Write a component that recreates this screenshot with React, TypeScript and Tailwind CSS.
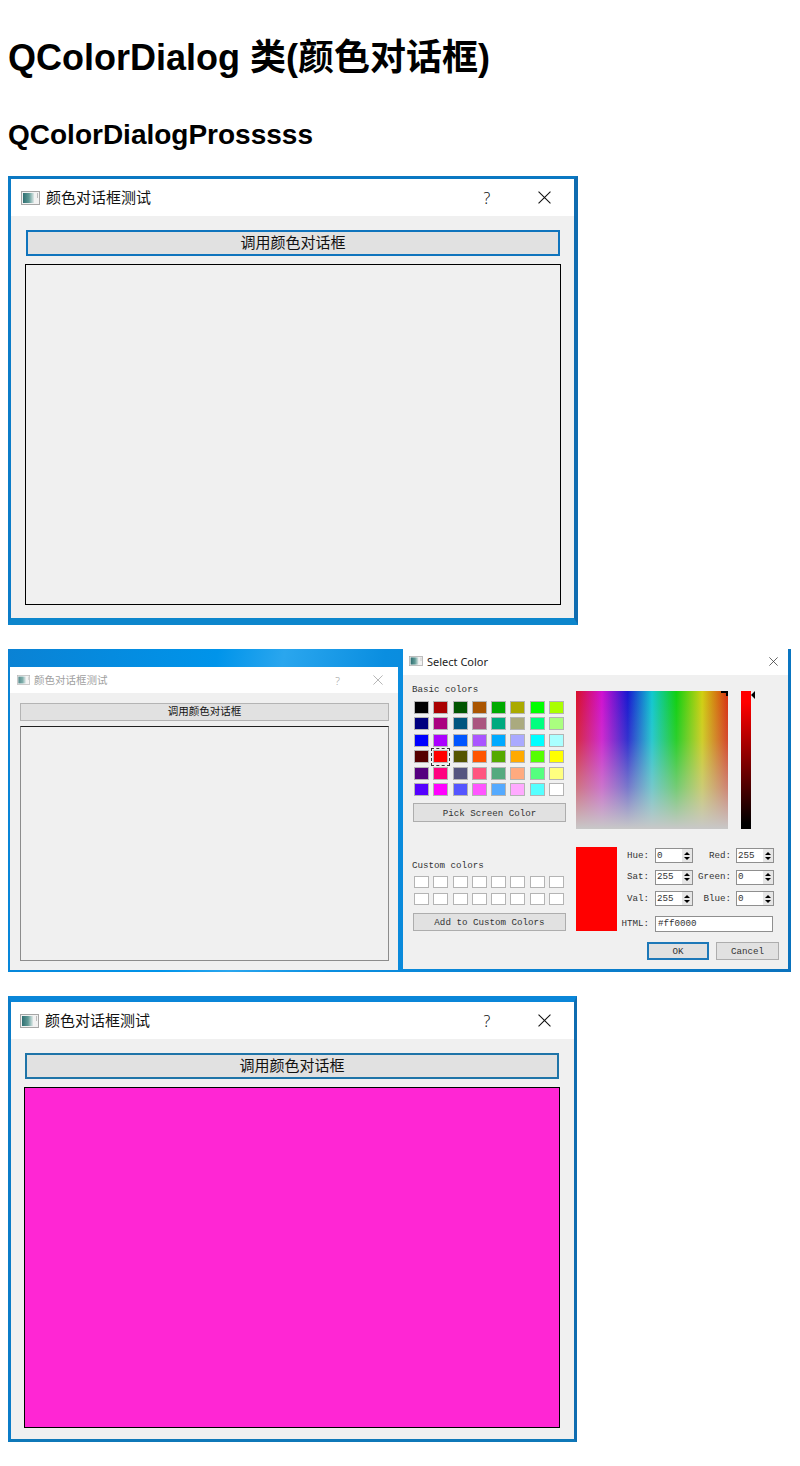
import React from "react";

const cjk = "font-['Liberation_Sans','Noto_Sans_CJK_SC',sans-serif]";
const mono = "font-['Liberation_Mono','Noto_Sans_CJK_SC',monospace] text-[9.2px] leading-[12px] text-[#333]";

function WinIcon({ className = "", faded = false }: { className?: string; faded?: boolean }) {
  return (
    <svg viewBox="0 0 19 14" className={className} style={{ opacity: faded ? 0.8 : 1 }}>
      <defs>
        <linearGradient id="wi" x1="0" x2="1" y1="0" y2="0">
          <stop offset="0" stopColor="#2f6f72" />
          <stop offset="0.55" stopColor="#5f9a96" />
          <stop offset="1" stopColor="#dfe9e8" />
        </linearGradient>
      </defs>
      <rect x="0.5" y="0.5" width="18" height="13" fill="#f2f2f2" stroke="#a6a6a6" />
      <rect x="2" y="2" width="11" height="10" fill="url(#wi)" />
      <rect x="16" y="2" width="1" height="5" fill="#bcbcbc" />
    </svg>
  );
}

function CloseGlyph({ className = "", stroke = "#111" }: { className?: string; stroke?: string }) {
  return (
    <svg viewBox="0 0 12 12" className={className}>
      <path d="M0.5 0.5 L11.5 11.5 M11.5 0.5 L0.5 11.5" stroke={stroke} strokeWidth="1" fill="none" />
    </svg>
  );
}

function LargeTitle({ pad }: { pad: string }) {
  return (
    <div className={`flex h-[37px] items-center bg-white ${pad}`}>
      <WinIcon className="h-[14px] w-[19px]" />
      <span className={`ml-[6px] text-[15px] leading-none text-[#111] ${cjk}`}>颜色对话框测试</span>
      <span className="ml-auto w-[12px] text-center font-['Noto_Sans',sans-serif] text-[16px] font-light leading-none text-[#111]">?</span>
      <CloseGlyph className="ml-[45px] mr-[23px] h-[13px] w-[13px]" />
    </div>
  );
}

function Swatch({ c }: { c: string }) {
  return <div className="h-[12.6px] w-[15px] border border-[#b4b4b4]" style={{ background: c }} />;
}

const basic = [
  "#000000", "#aa0000", "#005500", "#aa5500", "#00aa00", "#aaaa00", "#00ff00", "#aaff00",
  "#00007f", "#aa007f", "#00557f", "#aa557f", "#00aa7f", "#aaaa7f", "#00ff7f", "#aaff7f",
  "#0000ff", "#aa00ff", "#0055ff", "#aa55ff", "#00aaff", "#aaaaff", "#00ffff", "#aaffff",
  "#550000", "#ff0000", "#555500", "#ff5500", "#55aa00", "#ffaa00", "#55ff00", "#ffff00",
  "#55007f", "#ff007f", "#55557f", "#ff557f", "#55aa7f", "#ffaa7f", "#55ff7f", "#ffff7f",
  "#5500ff", "#ff00ff", "#5555ff", "#ff55ff", "#55aaff", "#ffaaff", "#55ffff", "#ffffff",
];

function QtButton({ children, className = "" }: { children: React.ReactNode; className?: string }) {
  return (
    <div className={`flex items-center justify-center border border-[#adadad] bg-[#e1e1e1] ${mono} ${className}`}>
      {children}
    </div>
  );
}

function Spin({ value, w }: { value: string; w: string }) {
  return (
    <div className={`flex h-[15px] items-center border border-[#8f8f8f] bg-white pl-[1px] ${mono} ${w}`}>
      <span className="flex-1">{value}</span>
      <div className="flex h-full w-[10px] flex-col items-center justify-center gap-[2px] bg-[#e6e6e6]">
        <div className="h-0 w-0 border-x-[3px] border-b-[3px] border-x-transparent border-b-black" />
        <div className="h-0 w-0 border-x-[3px] border-t-[3px] border-x-transparent border-t-black" />
      </div>
    </div>
  );
}

function Row({ a, av, b, bv }: { a: string; av: string; b: string; bv: string }) {
  return (
    <div className="flex h-[15px] items-center">
      <span className={`w-[32px] text-right ${mono}`}>{a}</span>
      <div className="ml-[6px]"><Spin value={av} w="w-[38px]" /></div>
      <span className={`w-[38px] text-right ${mono}`}>{b}</span>
      <div className="ml-[5px]"><Spin value={bv} w="w-[38px]" /></div>
    </div>
  );
}

function SelectColor() {
  return (
    <div className="h-[320px] w-[385px] bg-[#f0f0f0]">
      <div className="flex h-[26px] items-center bg-white pb-[2px] pl-[6px]">
        <WinIcon className="h-[10px] w-[14px]" />
        <span className="ml-[4px] font-['Noto_Sans',sans-serif] text-[11px] leading-none text-[#222]">Select Color</span>
        <CloseGlyph className="ml-auto mr-[10px] h-[9px] w-[9px]" stroke="#333" />
      </div>
      <div className="flex">
        <div className="w-[173px] pl-[9px]">
          <div className={`mt-[9px] ${mono}`}>Basic colors</div>
          <div className="ml-[2px] mt-[5px] grid grid-cols-[repeat(8,15px)] gap-x-[4.3px] gap-y-[3.9px]">
            {basic.map((c, i) => (
              <div key={i} className="relative">
                <Swatch c={c} />
                {i === 25 && <div className="absolute -inset-x-[2px] -inset-y-[2.5px] border border-dashed border-[#333]" />}
              </div>
            ))}
          </div>
          <QtButton className="ml-[1px] mt-[7px] h-[19px] w-[153px] pt-[2px]">Pick Screen Color</QtButton>
          <div className={`mt-[38px] ${mono}`}>Custom colors</div>
          <div className="ml-[2px] mt-[4px] grid grid-cols-[repeat(8,15px)] gap-x-[4.3px] gap-y-[5px]">
            {Array.from({ length: 16 }).map((_, i) => (
              <div key={i} className="h-[12px] w-[15px] border border-[#b4b4b4] bg-white" />
            ))}
          </div>
          <QtButton className="ml-[1px] mt-[8px] h-[18px] w-[153px] pt-[2px]">Add to Custom Colors</QtButton>
        </div>
        <div className="w-[212px]">
          <div className="mt-[16px] flex">
            <div className="relative h-[138px] w-[152px] bg-[linear-gradient(to_bottom,rgba(200,200,200,0)_0%,rgba(200,200,200,0.15)_35%,rgba(200,200,200,0.55)_70%,rgba(200,200,200,1)_100%),linear-gradient(to_right,#d8102a_0%,#d010d0_17%,#1818d0_34%,#10c8d0_50%,#10d010_66%,#d0d010_83%,#d83010_100%)]">
              <div className="absolute right-0 top-0 h-[5px] w-[7px] border-r-2 border-t-2 border-black" />
            </div>
            <div className="relative ml-[13px] h-[138px] w-[10px] bg-[linear-gradient(to_bottom,#ff0000_8%,#000000_96%)]">
              <div className="absolute -right-[4px] top-0 h-0 w-0 border-y-[4px] border-r-[4px] border-y-transparent border-r-black" />
            </div>
          </div>
          <div className="mt-[18px] flex">
            <div className="h-[84px] w-[41px] bg-[#ff0000]" />
            <div className="flex flex-col pt-[1px]">
              <div className="flex flex-col gap-[6.5px]">
                <Row a="Hue:" av="0" b="Red:" bv="255" />
                <Row a="Sat:" av="255" b="Green:" bv="0" />
                <Row a="Val:" av="255" b="Blue:" bv="0" />
              </div>
              <div className="mt-[10px] flex h-[15px] items-center">
                <span className={`w-[32px] whitespace-nowrap text-right ${mono}`}>HTML:</span>
                <div className={`ml-[6px] flex h-[16px] w-[118px] items-center border border-[#8f8f8f] bg-white pl-[2px] ${mono}`}>#ff0000</div>
              </div>
            </div>
          </div>
          <div className="ml-[71px] mt-[11px] flex gap-[7px]">
            <QtButton className="h-[18px] w-[62px] border-2 !border-[#1d78b8] pt-[1px]">OK</QtButton>
            <QtButton className="h-[18px] w-[63px] pt-[1px]">Cancel</QtButton>
          </div>
        </div>
      </div>
    </div>
  );
}

function Composite() {
  return (
    <div className="mt-[24px] flex h-[323px] w-[783px] bg-[linear-gradient(100deg,#0a82d4_0%,#0094ea_25%,#2aa6ee_33%,#0a8ee0_45%,#0a72bd_100%)]">
      <div className="ml-[2px] mt-[18px] h-[303px] w-[388px] bg-[#f0f0f0]">
        <div className="flex h-[26px] items-center bg-white pl-[7px]">
          <WinIcon className="h-[10px] w-[13px]" faded />
          <span className={`ml-[4px] text-[10.5px] leading-none text-[#a0a0a0] ${cjk}`}>颜色对话框测试</span>
          <span className="ml-auto font-['Noto_Sans',sans-serif] text-[11px] font-light leading-none text-[#a8a8a8]">?</span>
          <CloseGlyph className="ml-[33px] mr-[15px] h-[10px] w-[10px]" stroke="#a8a8a8" />
        </div>
        <div className={`mx-[10px] mt-[10px] flex h-[18px] w-[369px] items-center justify-center border border-[#b4b4b4] bg-[#e1e1e1] text-[10.5px] text-[#111] ${cjk}`}>
          调用颜色对话框
        </div>
        <div className="mx-[10px] mt-[5px] h-[235px] w-[369px] border border-[#8c8c8c] border-t-[#222] bg-[#f0f0f0]" />
      </div>
      <div className="ml-[5px]">
        <SelectColor />
      </div>
    </div>
  );
}

export default function App() {
  return (
    <div className={`min-h-[1466px] bg-white px-2 ${cjk}`}>
      <h1 className="pt-[37px] text-[36px] font-bold leading-[42px] text-black">QColorDialog 类(颜色对话框)</h1>
      <h2 className="mt-[40px] text-[28px] font-bold leading-[32px] text-black">QColorDialogProsssss</h2>

      <div className="mt-[25px] h-[449px] w-[570px] border-b-[7px] border-l-[3px] border-r-[4px] border-t-[3px] border-b-[#0d86cc] border-l-[#0b7cc8] border-r-[#0f6cb0] border-t-[#0b78c2] bg-[#f0f0f0]">
        <LargeTitle pad="pl-[10px]" />
        <div className={`ml-[15px] mt-[14px] flex h-[26px] w-[534px] items-center justify-center border-2 border-[#0f74bd] bg-[#e1e1e1] text-[15px] text-[#111] ${cjk}`}>
          调用颜色对话框
        </div>
        <div className="ml-[14px] mt-[8px] h-[341px] w-[536px] border border-black bg-[#f0f0f0]" />
      </div>

      <Composite />

      <div className="mt-[24px] h-[446px] w-[569px] border-b-[3px] border-l-[3px] border-r-[3px] border-t-[6px] border-b-[#0f78b8] border-l-[#0b7cc8] border-r-[#0f6cb0] border-t-[#0a86d8] bg-[#f0f0f0]">
        <LargeTitle pad="pl-[9px]" />
        <div className={`ml-[14px] mt-[14px] flex h-[26px] w-[534px] items-center justify-center border-2 border-[#1f74a8] bg-[#e1e1e1] text-[15px] text-[#111] ${cjk}`}>
          调用颜色对话框
        </div>
        <div className="ml-[13px] mt-[8px] h-[341px] w-[536px] border border-black bg-[#ff26d4]" />
      </div>
    </div>
  );
}
